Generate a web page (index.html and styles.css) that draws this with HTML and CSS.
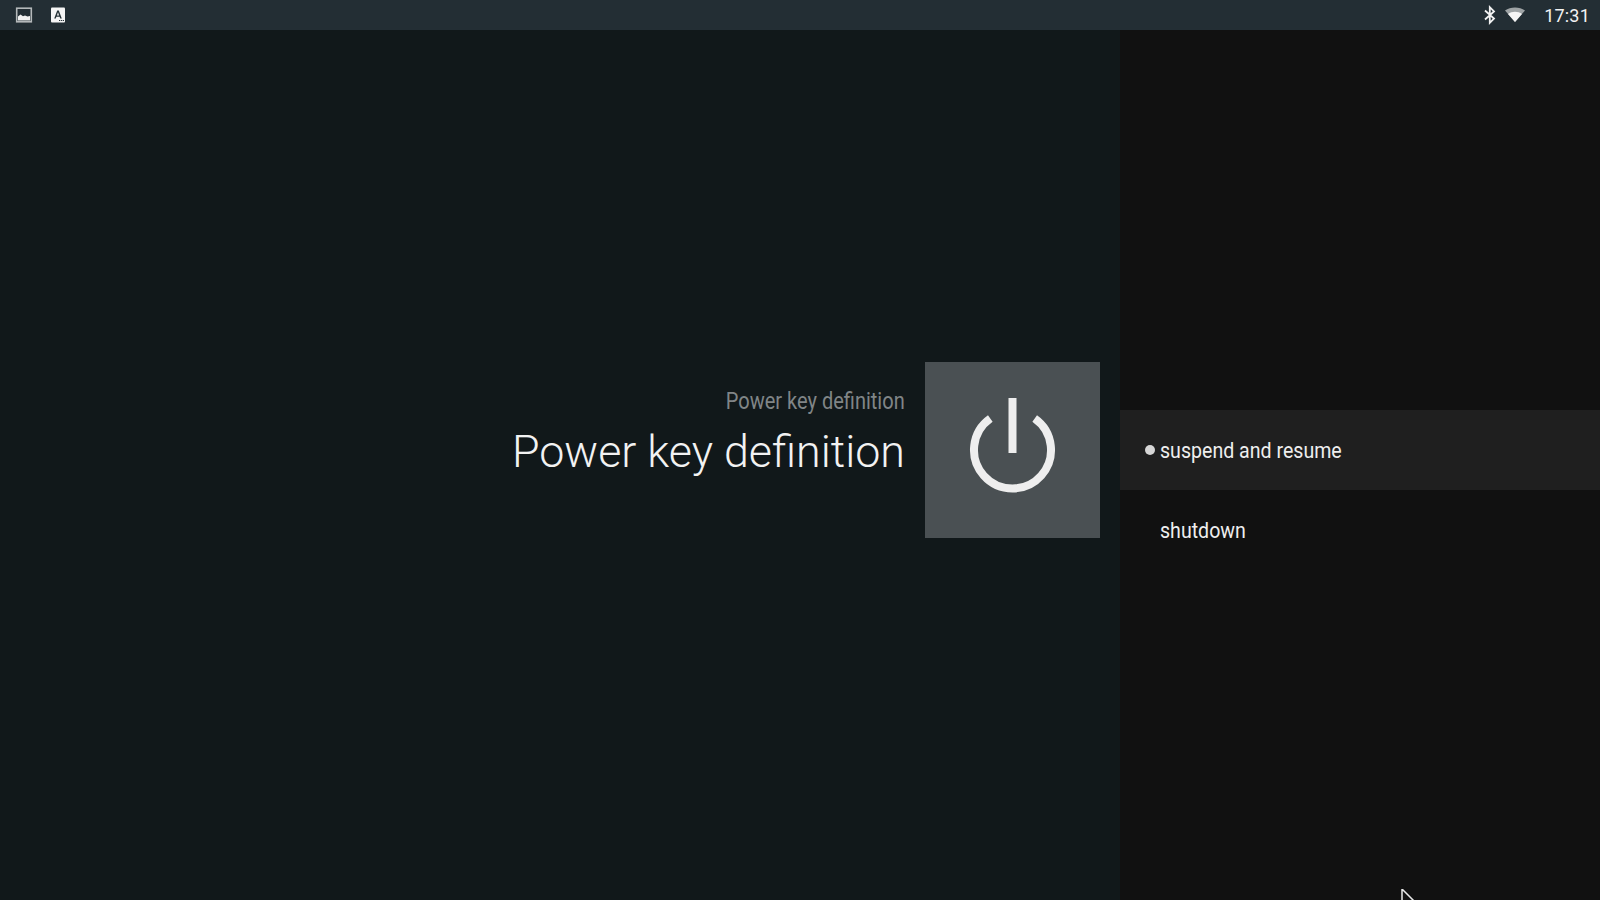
FILE: index.html
```html
<!DOCTYPE html>
<html lang="en">
<head>
<meta charset="utf-8">
<title>Power key definition</title>
<link rel="stylesheet" href="styles.css">
</head>
<body>
<header class="statusbar">
  <div class="status-left">
    <svg class="ic-image" width="18" height="18" viewBox="0 0 18 18"><rect x="1.7" y="2.2" width="14.6" height="13.6" fill="none" stroke="#b4b8ba" stroke-width="1.6"/><path d="M3 14.5V10.5L5.5 8.5L8 10.3L10 9.5L12.5 10.5L15 10V14.5Z" fill="#f2f2f2"/></svg>
    <svg class="ic-note" width="16" height="16" viewBox="0 0 16 16"><rect x="1" y="0.5" width="14" height="15" rx="1" fill="#f5f5f5"/><path d="M4.2 11.5L7.2 3.5H8.8L11.8 11.5H10.2L9.6 9.7H6.4L5.8 11.5ZM6.9 8.4H9.1L8 5.3Z" fill="#263238"/><path d="M9 13h1.3v1H9ZM11 13h1.3v1H11ZM13 13h1v1h-1Z" fill="#263238"/></svg>
  </div>
  <div class="status-right">
    <svg class="ic-bt" width="14" height="20" viewBox="0 0 14 20"><path d="M2 5.5L11 13.6L6.8 17.8V2.2L11 6.4L2 14.5" fill="none" stroke="#f2f2f2" stroke-width="1.8"/></svg>
    <svg class="ic-wifi" width="20" height="16" viewBox="0 0 20 16"><path d="M10 15L0 3.6C2.8 1.6 6.2 0.5 10 0.5C13.8 0.5 17.2 1.6 20 3.6Z" fill="#9ea3a5"/><path d="M10 15L3 7C5 5.5 7.4 4.7 10 4.7C12.6 4.7 15 5.500 17 7Z" fill="#f5f5f5"/></svg>
    <span class="clock">17:31</span>
  </div>
</header>
<main class="content">
  <section class="guidance">
    <div class="guidance-text">
      <div class="breadcrumb">Power key definition</div>
      <h1 class="title">Power key definition</h1>
    </div>
    <div class="tile">
      <svg width="175" height="175" viewBox="0 0 175 175"><rect x="83.5" y="36" width="8" height="55" fill="#eeeeee"/><path d="M65.3 56.5A38.5 38.5 0 1 0 109.7 56.5" fill="none" stroke="#eeeeee" stroke-width="8"/></svg>
    </div>
  </section>
  <aside class="actions">
    <div class="action active"><span class="dot"></span><span>suspend and resume</span></div>
    <div class="action"><span>shutdown</span></div>
  </aside>
</main>
<svg class="cursor" width="16" height="14" viewBox="0 0 16 14"><path d="M1 0V14M1 0L14 13" fill="none" stroke="#e8e8e8" stroke-width="1.5"/></svg>
</body>
</html>
```
FILE: styles.css
```css
* { box-sizing: border-box; }
html, body { margin: 0; height: 100%; }
body {
  width: 1600px;
  height: 900px;
  overflow: hidden;
  display: flex;
  flex-direction: column;
  font-family: Roboto, "Liberation Sans", sans-serif;
  background: #11181a;
  position: relative;
}
.statusbar {
  height: 30px;
  flex: none;
  background: #232e34;
  display: flex;
  justify-content: space-between;
  align-items: center;
  color: #f2f2f2;
}
.status-left { display: flex; align-items: center; padding-left: 15px; gap: 17px; }
.status-right { display: flex; align-items: center; padding-right: 10px; }
.ic-bt { margin-right: 8px; }
.ic-wifi { margin-right: 19px; }
.clock { font-size: 18px; letter-spacing: 0.2px; }
.content { flex: 1; display: flex; min-height: 0; }
.guidance {
  width: 1120px;
  display: flex;
  justify-content: flex-end;
  align-items: flex-start;
  padding: 332px 20px 0 0;
  background: #11181a;
}
.guidance-text {
  display: flex;
  flex-direction: column;
  align-items: flex-end;
  margin-right: 20px;
  padding-top: 26px;
}
.breadcrumb {
  font-size: 23px;
  line-height: 28px;
  color: #808587;
  transform: scaleX(0.87);
  transform-origin: right center;
  white-space: nowrap;
}
.title {
  margin: 8px 0 0;
  font-size: 44.8px;
  font-weight: 300;
  line-height: 56px;
  color: #f2f2f2;
  white-space: nowrap;
}
.tile { width: 175px; height: 176px; background: #4a5053; flex: none; }
.tile svg { display: block; }
.actions {
  flex: 1;
  background: #111111;
  padding-top: 380px;
}
.action {
  height: 80px;
  display: flex;
  align-items: center;
  padding-left: 40px;
  position: relative;
  font-size: 22px;
  color: #eeeeee;
}
.action > span:last-child { transform: scaleX(0.89); transform-origin: left center; white-space: nowrap; }
.action.active { background: #1f1f1f; }
.dot {
  position: absolute;
  left: 25px;
  top: 35px;
  width: 10px;
  height: 10px;
  border-radius: 50%;
  background: #d6d6d6;
}
.cursor { position: absolute; left: 1401px; top: 889px; }
```
